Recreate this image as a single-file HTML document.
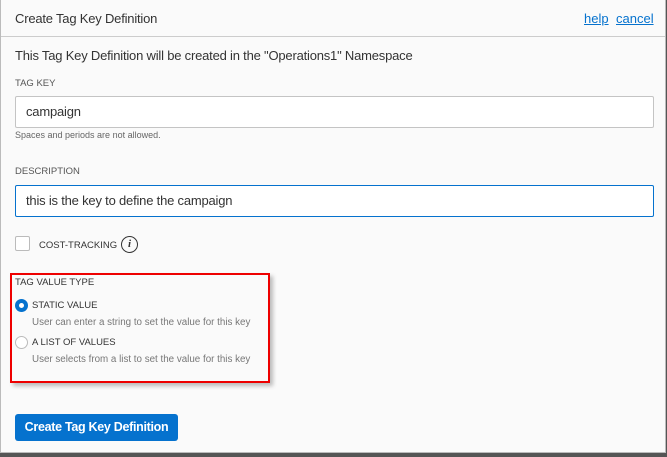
<!DOCTYPE html>
<html><head><style>
*{box-sizing:border-box;margin:0;padding:0}
body{width:667px;height:457px;overflow:hidden;background:#555;font-family:"Liberation Sans",sans-serif;position:relative}
.dlg{position:absolute;left:0;top:0;width:666px;height:453px;background:#fafafa;border:1px solid #bbb;border-top:none}
.hdr{height:37px;border-bottom:1px solid #ccc;position:relative}
.t{position:absolute;font-size:13px;letter-spacing:-0.2px;color:#333;white-space:nowrap}
.s{position:absolute;font-size:9.5px;color:#555;white-space:nowrap}
.link{color:#0572ce;text-decoration:underline;font-size:13px;position:absolute;top:11px}
.inp{position:absolute;left:14px;width:639px;height:32px;background:#fff;border:1px solid #c4c4c4;border-radius:2px}
</style></head><body>
<div class="dlg">
<div class="hdr">
<div class="t" style="left:14px;top:11px">Create Tag Key Definition</div>
<span class="link" style="left:583px">help</span>
<span class="link" style="left:615px">cancel</span>
</div>
<div class="t" style="left:14px;top:48px">This Tag Key Definition will be created in the "Operations1" Namespace</div>
<div class="s" style="left:14px;top:78px">TAG KEY</div>
<div class="inp" style="top:96px"></div>
<div class="t" style="left:25px;top:104px">campaign</div>
<div class="s" style="left:14px;top:130px;color:#666;font-size:9px">Spaces and periods are not allowed.</div>
<div class="s" style="left:14px;top:166px">DESCRIPTION</div>
<div class="inp" style="top:185px;border-color:#0572ce"></div>
<div class="t" style="left:25px;top:193px">this is the key to define the campaign</div>
<div style="position:absolute;left:14px;top:236px;width:15px;height:15px;border:1px solid #bbb;border-radius:2px;background:#fff"></div>
<div class="s" style="left:38px;top:240px;color:#333">COST-TRACKING</div>
<div style="position:absolute;left:120px;top:236px;width:17px;height:17px;border:1.3px solid #333;border-radius:50%;font:italic bold 11px 'Liberation Serif',serif;text-align:center;line-height:15px;color:#333">i</div>
<div style="position:absolute;left:9px;top:273px;width:260px;height:110px;border:2px solid #e00;box-shadow:3px 3px 4px rgba(0,0,0,0.25)"></div>
<div class="s" style="left:14px;top:277px;color:#333">TAG VALUE TYPE</div>
<div style="position:absolute;left:14px;top:299px;width:13px;height:13px;border-radius:50%;background:#0572ce"><div style="position:absolute;left:4px;top:4px;width:5px;height:5px;border-radius:50%;background:#fff"></div></div>
<div class="s" style="left:31px;top:300px;color:#333">STATIC VALUE</div>
<div class="s" style="left:31px;top:317px;color:#777;font-size:9.8px">User can enter a string to set the value for this key</div>
<div style="position:absolute;left:14px;top:336px;width:13px;height:13px;border-radius:50%;border:1px solid #bbb;background:#fff"></div>
<div class="s" style="left:31px;top:337px;color:#333">A LIST OF VALUES</div>
<div class="s" style="left:31px;top:354px;color:#777;font-size:9.8px">User selects from a list to set the value for this key</div>
<div style="position:absolute;left:14px;top:414px;width:163px;height:27px;background:#0572ce;border-radius:3px;color:#fff;font-size:12.5px;font-weight:bold;text-align:center;line-height:27px;letter-spacing:-0.3px">Create Tag Key Definition</div>
</div>
</body></html>
